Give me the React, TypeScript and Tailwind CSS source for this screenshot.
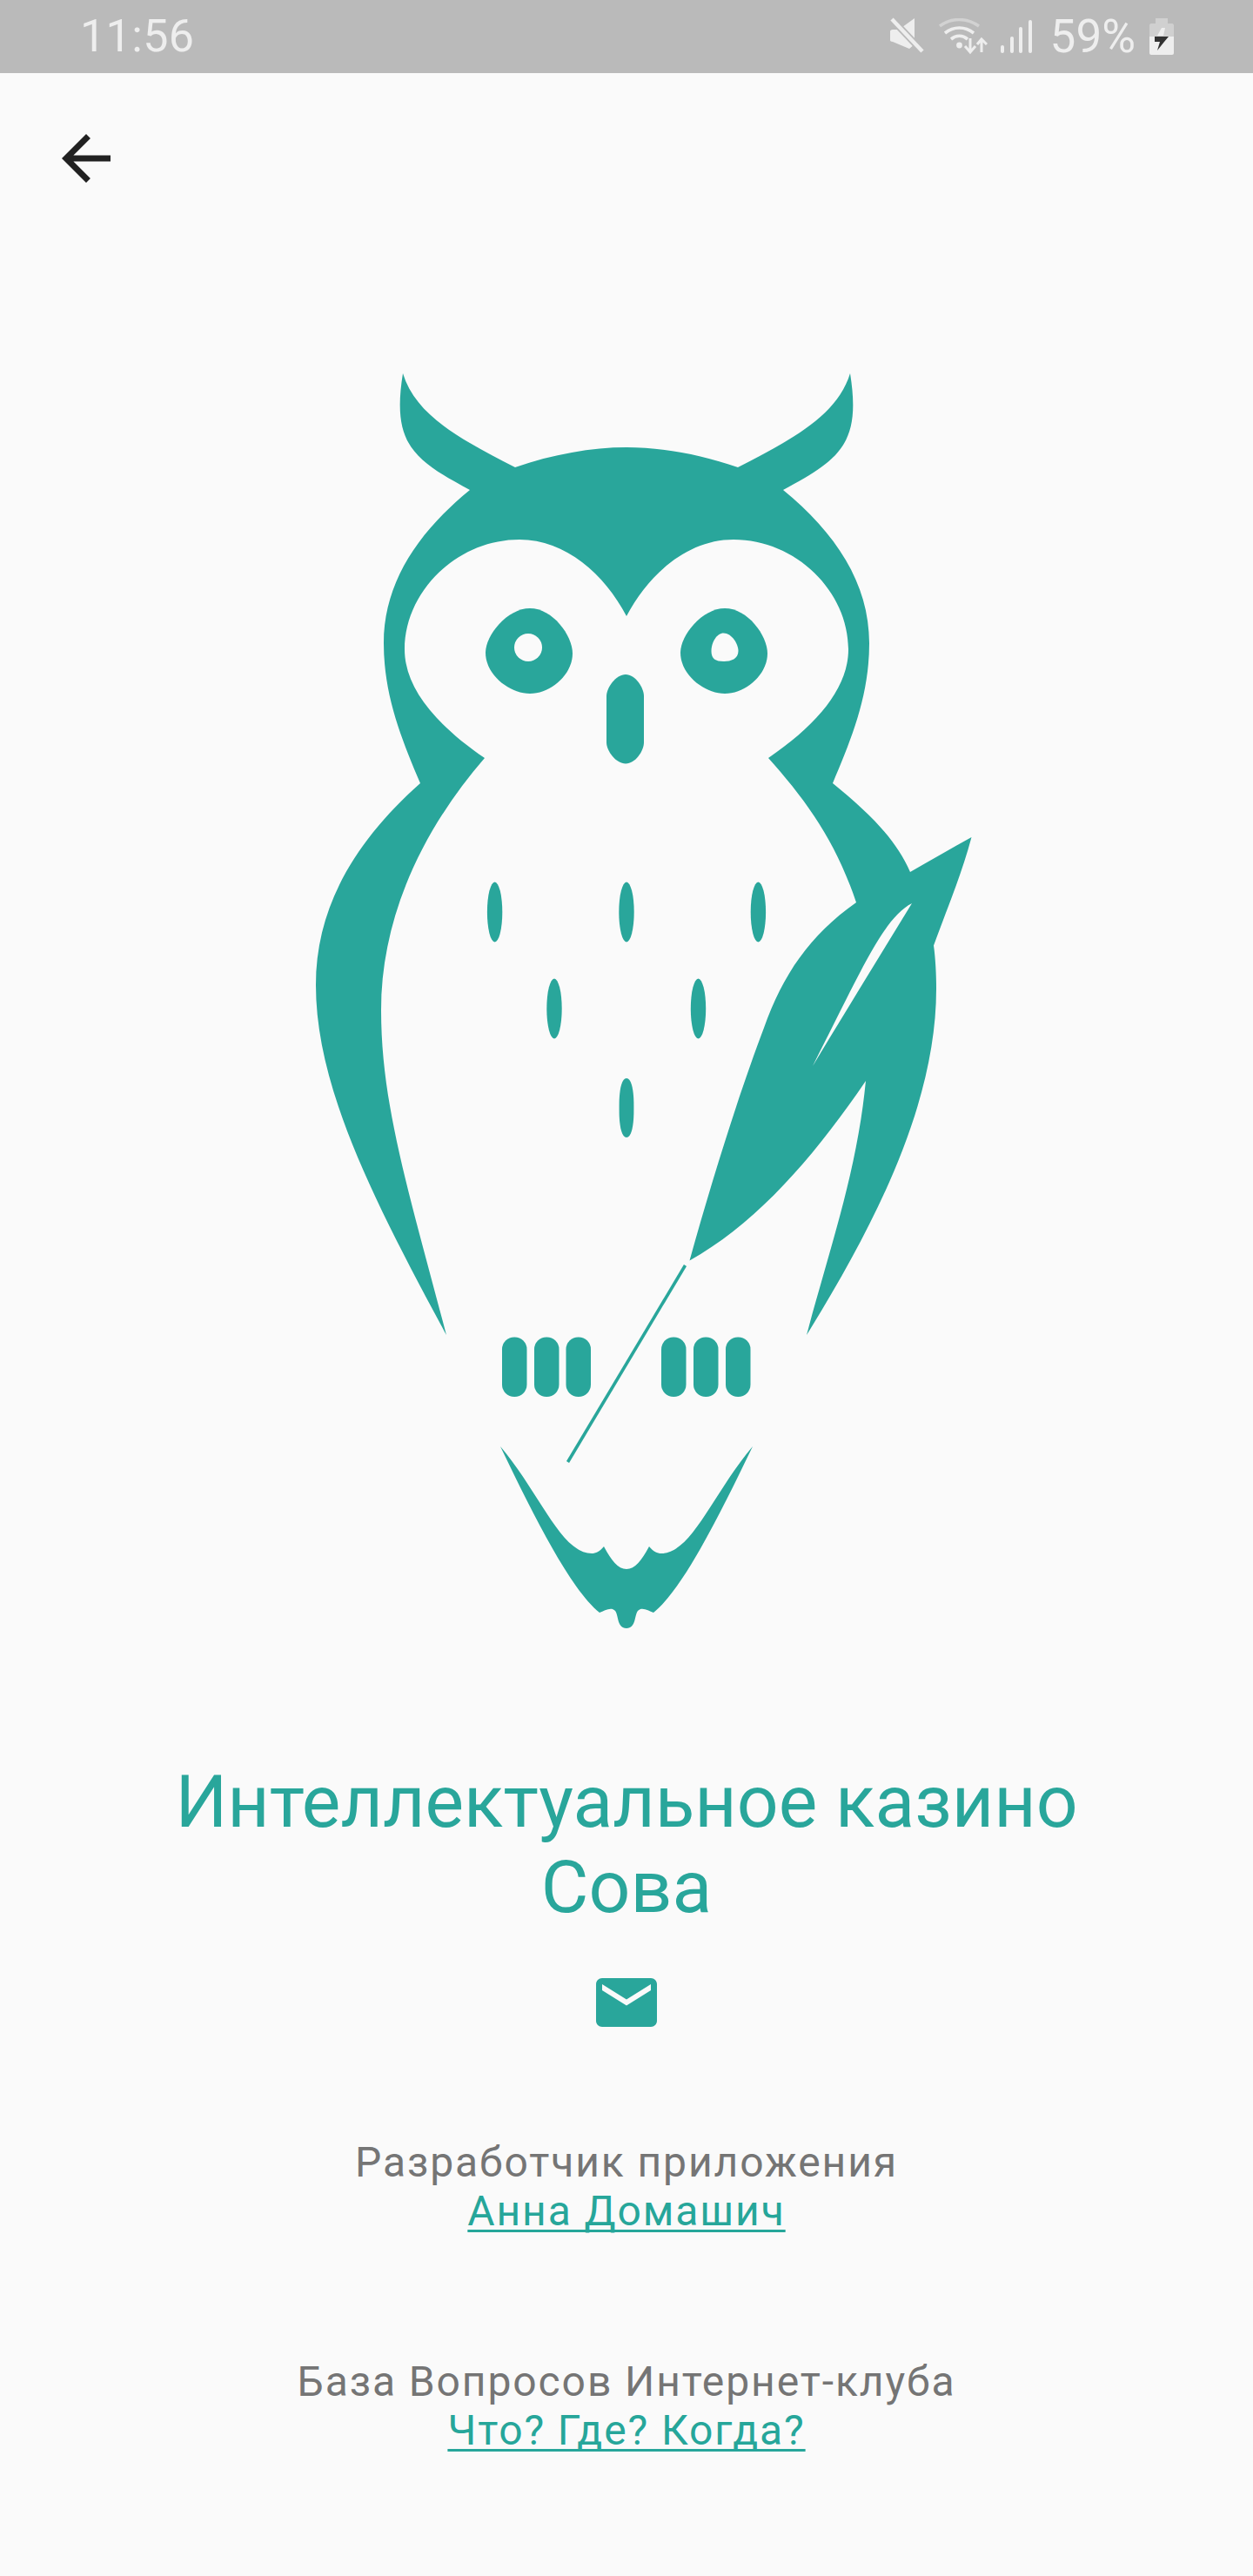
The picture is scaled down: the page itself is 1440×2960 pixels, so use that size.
type P = [number, number];

const bez = (pts: P[]) => {
  let d = "";
  for (let i = 1; i < pts.length; i += 3) {
    d += `C${pts[i][0]} ${pts[i][1]} ${pts[i + 1][0]} ${pts[i + 1][1]} ${pts[i + 2][0]} ${pts[i + 2][1]}`;
  }
  return d;
};
const m = (pts: P[]): P[] => pts.map(([x, y]) => [1440 - x, y]);
const r = (pts: P[]): P[] => [...pts].reverse();
const shape = (segs: P[][]) => `M${segs[0][0][0]} ${segs[0][0][1]}` + segs.map(bez).join("") + "Z";

const earInner: P[] = [[463, 429], [478, 478], [530, 505], [592, 537]];
const crown: P[] = [[592, 537], [635, 522], [680, 514], [720, 514], [760, 514], [805, 522], [848, 537]];
const earOuter: P[] = [[463, 429], [450, 510], [475, 528], [540, 563]];
const headOuter: P[] = [[540, 563], [480, 612], [441, 670], [441, 739], [441, 800], [462, 850], [483, 900]];
const bodyLeftOuter: P[] = [[483, 900], [410, 965], [363, 1040], [363, 1132], [363, 1250], [430, 1380], [513, 1534]];
const bodyLeftInner: P[] = [[513, 1534], [470, 1370], [438, 1270], [438, 1161], [438, 1060], [480, 960], [557, 871]];
const faceLeft: P[] = [[557, 871], [500, 832], [465, 790], [465, 746], [465, 680], [525, 620], [597, 620], [650, 620], [695, 660], [720, 708]];
const neckRight: P[] = [[883, 871], [925, 918], [960, 965], [984, 1037]];
const featherLeft: P[] = [[984, 1037], [930, 1075], [900, 1120], [878, 1181], [850, 1255], [820, 1350], [792.5, 1448.6]];
const featherLow: P[] = [[792.5, 1448.6], [870, 1405], [935, 1330], [995, 1242]];
const bodyRightInner: P[] = [[995, 1242], [985, 1345], [955, 1430], [927, 1534]];
const bodyRightOuter: P[] = [[927, 1534], [1010, 1400], [1076, 1265], [1076, 1136], [1076, 1120], [1075, 1100], [1073, 1086.5]];
const featherTop: P[] = [[1073, 1086.5], [1090, 1040], [1105, 1005], [1116.5, 962]];
const featherNotch: P[] = [[1116.5, 962], [1093, 975], [1070, 988], [1046, 1002]];
const bodyRightUpper: P[] = [[1046, 1002], [1030, 965], [1000, 935], [957, 900]];

const outline = shape([
  earInner,
  crown,
  r(m(earInner)),
  m(earOuter),
  m(headOuter),
  r(bodyRightUpper),
  r(featherNotch),
  r(featherTop),
  r(bodyRightOuter),
  r(bodyRightInner),
  r(featherLow),
  r(featherLeft),
  r(neckRight),
  m(faceLeft),
  r(faceLeft),
  r(bodyLeftInner),
  r(bodyLeftOuter),
  r(headOuter),
  r(earOuter),
]);

const slit = shape([
  [[1048, 1038], [1015, 1055], [990, 1115], [934, 1225]],
  [[934, 1225], [970, 1165], [1010, 1100], [1048, 1038]],
]);

const tailLeftUpper: P[] = [[575, 1662], [620, 1715], [645, 1785], [680, 1785], [685, 1785], [690, 1782], [694, 1777]];
const tailNotch: P[] = [[694, 1777], [702, 1792], [710, 1803], [720, 1803], [730, 1803], [738, 1792], [746, 1777]];
const tailRightLower: P[] = [[865, 1662], [825, 1745], [785, 1825], [751, 1853]];
const tailBottomRight: P[] = [[751, 1853], [745, 1851], [738, 1846], [733, 1851], [729, 1856], [731, 1871], [720, 1871]];

const tail = shape([
  tailLeftUpper,
  tailNotch,
  r(m(tailLeftUpper)),
  tailRightLower,
  tailBottomRight,
  r(m(tailBottomRight)),
  r(m(tailRightLower)),
]);

const eye = (c: number) =>
  shape([
    [
      [c, 699], [c + 26, 699], [c + 49, 730], [c + 49, 751],
      [c + 49, 775], [c + 24, 797], [c, 797],
      [c - 24, 797], [c - 51, 775], [c - 51, 750],
      [c - 51, 730], [c - 26, 699], [c, 699],
    ],
  ]);

const drop = shape([
  [
    [831.5, 727.5], [841, 727.5], [848.5, 740], [848.5, 748],
    [848.5, 757], [840, 760], [832, 760],
    [822, 760], [817.5, 757], [817.5, 748],
    [817.5, 738], [824, 727.5], [831.5, 727.5],
  ],
]);

const nose = "M719 775C708 775 697 790 697 800V853C697 863 708 877.5 719 877.5C730 877.5 740 863 740 853V800C740 790 730 775 719 775Z";
const lowSpot = "M711.6 1270C711.6 1250 715 1239 720 1239C725 1239 728.4 1250 728.4 1270V1276C728.4 1296 725 1307 720 1307C715 1307 711.6 1296 711.6 1276Z";

const toes = [577, 614, 650.5, 760, 797, 834];
const spots: P[] = [[568.6, 1048], [720, 1048], [871.4, 1048], [637, 1159], [802.5, 1159]];

function Owl() {
  return (
    <svg viewBox="320 420 800 1460" className="block w-[800px] h-[1460px] mt-[196px]">
      <g fill="#29A69B">
        <path d={outline} />
        <path d={tail} />
        <path d={eye(609)} />
        <path d={eye(833)} />
        <path d={nose} />
        {spots.map(([x, y]) => (
          <ellipse key={x} cx={x} cy={y} rx="8.7" ry="34.5" />
        ))}
        <path d={lowSpot} />
        {toes.map((x) => (
          <rect key={x} x={x} y="1536.5" width="28.5" height="68.5" rx="14" />
        ))}
      </g>
      <path d={slit} fill="#FAFAFA" />
      <path d="M787.5 1454 652.5 1680" stroke="#29A69B" strokeWidth="3.6" fill="none" />
      <ellipse cx="607" cy="744" rx="16" ry="16" fill="#FAFAFA" />
      <path d={drop} fill="#FAFAFA" />
    </svg>
  );
}

function StatusIcons() {
  return (
    <div className="flex items-center h-full">
      <svg viewBox="0 0 40 42" className="w-[40px] h-[42px] mr-[16px] mt-[-2px]">
        <path d="M0 16C0 15 1 14 3 14H10L28 1V31L22 36 3 28C1 28 0 27 0 26Z" fill="#EEEEEE" />
        <path d="M2 2 37 39" stroke="#BABABA" strokeWidth="8" />
        <path d="M2 2 37 39" stroke="#EEEEEE" strokeWidth="4.5" />
      </svg>
      <svg viewBox="0 0 56 42" className="w-[56px] h-[42px] mr-[15px]">
        <path d="M1 9C14 -1 32 -1 46 9" stroke="#D2D2D2" strokeWidth="3.4" fill="none" />
        <path d="M7 17C17 9 30 9 40 17" stroke="#EEEEEE" strokeWidth="3.6" fill="none" />
        <path d="M14 24C20 19 27 19 33 24" stroke="#EEEEEE" strokeWidth="3.6" fill="none" />
        <circle cx="23.5" cy="31" r="3.4" fill="#EEEEEE" />
        <path d="M36 23V38M30 32 36 39 42 32" stroke="#EEEEEE" strokeWidth="3" fill="none" />
        <path d="M49 39V25M44 30 49 24 55 30" stroke="#EEEEEE" strokeWidth="3" fill="none" />
      </svg>
      <svg viewBox="0 0 36 40" className="w-[36px] h-[40px] mr-[21px]">
        <rect x="0" y="30" width="4" height="9" rx="2" fill="#EEEEEE" />
        <rect x="11" y="20" width="4" height="19" rx="2" fill="#EEEEEE" />
        <rect x="21" y="9" width="4" height="30" rx="2" fill="#EEEEEE" />
        <rect x="32" y="1" width="4" height="38" rx="2" fill="#EEEEEE" />
      </svg>
      <span className="text-[53px] leading-none text-[#EEEEEE] mr-[16px]">59%</span>
      <svg viewBox="0 0 28 42" className="w-[28px] h-[42px]">
        <path d="M7 0H21V6H26C27 6 28 7 28 8V21H0V8C0 7 1 6 2 6H7Z" fill="#D0D0D0" />
        <path d="M0 21H28V40C28 41 27 42 26 42H2C1 42 0 41 0 40Z" fill="#EEEEEE" />
        <path d="M14 11H18L16 20H9Z" fill="#EEEEEE" />
        <path d="M6 21H22L17 27 9 37 12 27H6Z" fill="#333333" />
      </svg>
    </div>
  );
}

function Credit({ label, link, className }: { label: string; link: string; className: string }) {
  return (
    <div className={`text-center text-[48px] leading-[56px] tracking-[1.9px] ${className}`}>
      <div className="text-[#757575]">{label}</div>
      <a className="text-[#26A69A] underline decoration-[3px] underline-offset-[5px] [text-decoration-skip-ink:none]">{link}</a>
    </div>
  );
}

export default function App() {
  return (
    <div className="w-[1440px] h-[2960px] bg-[#FAFAFA] flex flex-col font-['Roboto',sans-serif] overflow-hidden">
      <div className="h-[84px] bg-[#BABABA] flex items-center justify-between pl-[92px] pr-[91px] shrink-0">
        <span className="text-[52px] leading-none text-[#EEEEEE] tracking-[0.4px]">11:56</span>
        <StatusIcons />
      </div>
      <div className="pl-[57px] pt-[56px] shrink-0">
        <svg viewBox="0 0 24 24" className="w-[84px] h-[84px] block" fill="#212121">
          <path d="M20 11H7.83l5.59-5.59L12 4l-8 8 8 8 1.41-1.41L7.83 13H20v-2z" />
        </svg>
      </div>
      <div className="flex flex-col items-center">
        <Owl />
        <h1 className="mt-[142px] text-center text-[84px] leading-[98px] font-normal text-[#29A69B]">
          Интеллектуальное казино
          <br />
          Сова
        </h1>
        <svg viewBox="0 0 24 24" className="w-[84px] h-[84px] block mt-[41px]" fill="#29A69B">
          <path d="M20 4H4c-1.1 0-1.99.9-1.99 2L2 18c0 1.1.9 2 2 2h16c1.1 0 2-.9 2-2V6c0-1.1-.9-2-2-2zm0 4l-8 5-8-5V6l8 5 8-5v2z" />
        </svg>
        <Credit label="Разработчик приложения" link="Анна Домашич" className="mt-[114px]" />
        <Credit label="База Вопросов Интернет-клуба" link="Что? Где? Когда?" className="mt-[140px]" />
      </div>
    </div>
  );
}
